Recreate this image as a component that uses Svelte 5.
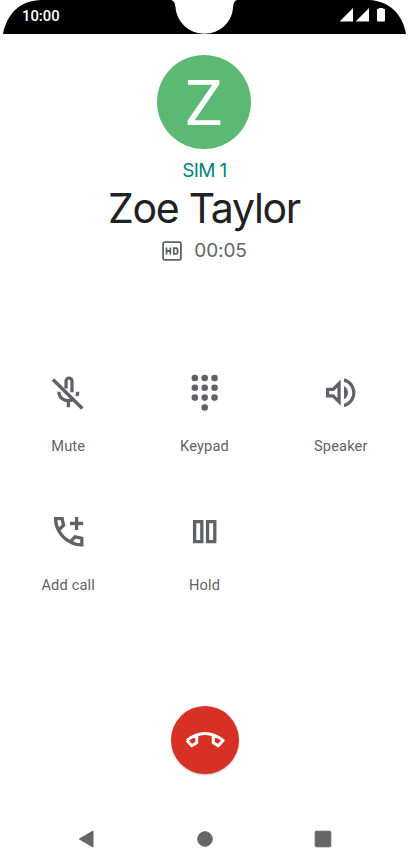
<script lang="ts">
	interface Props {
		name?: string;
		sim?: string;
		duration?: string;
	}

	let { name = 'Zoe Taylor', sim = 'SIM 1', duration = '00:05' }: Props = $props();

	const actions = [
		{ id: 'mute', label: 'Mute' },
		{ id: 'keypad', label: 'Keypad' },
		{ id: 'speaker', label: 'Speaker' },
		{ id: 'add', label: 'Add call' },
		{ id: 'hold', label: 'Hold' }
	];

	const dots = [
		[6, 3], [12, 3], [18, 3],
		[6, 9], [12, 9], [18, 9],
		[6, 15], [12, 15], [18, 15],
		[12, 21]
	];
</script>

<div class="screen">
	<header class="status">
		<svg class="status-shape" viewBox="0 0 409 34">
			<path d="M3 34C7 14 20 0 42 0H171Q175 1 175.5 7C176.5 22 189 33.7 204.5 33.7C220 33.7 232.5 22 233 7Q233.5 1 237 0H369C390 1 403 15 406 34Z" />
		</svg>
		<span class="time">10:00</span>
		<svg class="status-icons" viewBox="0 0 46 15">
			<path d="M0 13.5V13L13 0V13.5ZM16 13.5V13L29 0V13.5Z" />
			<path d="M37 1.5Q37 .8 37.8 .8H39V0H43V.8H44.2Q45 .8 45 1.5V12.5Q45 13.5 44 13.5H38Q37 13.5 37 12.5Z" />
		</svg>
	</header>

	<section class="caller">
		<div class="avatar">{name[0]}</div>
		<div class="sim">{sim}</div>
		<h1 class="name">{name}</h1>
		<div class="meta">
			<svg class="hd" viewBox="0 0 20 20">
				<rect x="1.1" y="1.1" width="17.8" height="17.8" rx="1.6" />
				<path d="M4.5 6.5V13.5M8.3 6.5V13.5M4.5 10H8.3M11.8 7.2H14.6L15.5 8.1V11.9L14.6 12.8H11.8Z" />
			</svg>
			<span>{duration}</span>
		</div>
	</section>

	<section class="actions">
		{#each actions as action (action.id)}
			<button class="action">
				<svg class="icon" viewBox="0 0 24 24">
					{#if action.id === 'mute'}
						<path class="line" d="M10.4 9.4V4.9A1.8 1.8 0 0 1 14 4.9V11.7M6 11.4C6 14.8 8.6 16.8 11.8 16.8Q13.6 16.8 15 16M17.5 11.4Q17.5 12.7 17 14M11.8 16.8V20.9" />
						<path class="line slash" d="M2.4 4L20.3 21.6" />
					{:else if action.id === 'keypad'}
						{#each dots as [x, y]}
							<circle cx={x} cy={y} r="2" />
						{/each}
					{:else if action.id === 'speaker'}
						<path d="M3 9v6h4l5 5V4L7 9H3zm7-.17v6.34L7.83 13H5v-2h2.83L10 8.83zM16.5 12c0-1.77-1.02-3.29-2.5-4.03v8.05c1.48-.73 2.5-2.25 2.5-4.02zM14 3.23v2.06c2.89.86 5 3.54 5 6.71s-2.11 5.85-5 6.71v2.06c4.01-.91 7-4.49 7-8.77 0-4.28-2.99-7.86-7-8.77z" />
					{:else if action.id === 'add'}
						<path class="line" d="M4 4H8L8.9 8.1L5.8 11.1Q4 8 4 4ZM5.8 11.1Q8.2 15.8 12.9 18.2L15.9 15.1L20 16V20Q16 20 12.9 18.2M16.8 3V11M12.8 7H20.8" />
					{:else}
						<path class="line" d="M5.85 5.9H10.25V18.1H5.85ZM13.75 5.9H18.15V18.1H13.75Z" />
					{/if}
				</svg>
				<span>{action.label}</span>
			</button>
		{/each}
	</section>

	<button class="end" aria-label="End call">
		<svg viewBox="0 0 40 18">
			<path d="M1.9 9.4Q20 -4.4 38.1 9.4L33.2 14.7L28.3 11.7V4.6M1.9 9.4L6.8 14.7L11.7 11.7V4.6" />
		</svg>
	</button>

	<nav class="nav">
		<svg viewBox="0 0 20 20"><path d="M2.3 10L16 2V18Z" /></svg>
		<svg viewBox="0 0 20 20"><circle cx="10" cy="10" r="7.3" /></svg>
		<svg viewBox="0 0 20 20"><rect x="2.2" y="2.2" width="15.6" height="15.6" rx="1" /></svg>
	</nav>
</div>

<style>
	:global(body) {
		background: #fff;
	}

	.screen {
		display: flex;
		flex-direction: column;
		align-items: center;
		width: 409px;
		height: 864px;
		overflow: hidden;
		background: #fff;
		font-family: Roboto, sans-serif;
		color: #5f6368;
	}

	.status {
		position: relative;
		display: flex;
		justify-content: space-between;
		box-sizing: border-box;
		width: 100%;
		height: 34px;
		padding: 8px 23.5px 0 22px;
	}

	.status-shape {
		position: absolute;
		inset: 0;
		width: 409px;
		height: 34px;
	}

	.time {
		position: relative;
		font-size: 14.8px;
		font-weight: 500;
		line-height: 16px;
		color: #fff;
	}

	.status-icons {
		position: relative;
		width: 46px;
		height: 15px;
		fill: #fff;
	}

	.caller {
		display: flex;
		flex-direction: column;
		align-items: center;
		height: 314px;
		padding-top: 21px;
		font-family: Inter, sans-serif;
	}

	.avatar {
		width: 94px;
		height: 94px;
		margin-right: 1px;
		border-radius: 50%;
		background: #5bb974;
		font-family: Roboto, sans-serif;
		font-size: 63px;
		line-height: 98px;
		text-align: center;
		color: #fff;
	}

	.sim {
		margin-top: 10px;
		font-size: 19px;
		line-height: 24px;
		letter-spacing: -0.6px;
		color: #00857a;
	}

	.name {
		margin: 0 0 0 -1px;
		font-size: 41px;
		font-weight: 400;
		line-height: 50px;
		letter-spacing: -1.3px;
		white-space: nowrap;
		color: #202124;
	}

	.meta {
		display: flex;
		align-items: center;
		gap: 12px;
		margin-top: 6px;
		font-size: 19px;
		line-height: 24px;
		letter-spacing: -0.1px;
	}

	.hd {
		width: 20px;
		height: 20px;
		fill: none;
		stroke: #5f6368;
		stroke-width: 1.8;
	}

	.actions {
		display: grid;
		grid-template-columns: repeat(3, 136.3px);
		grid-auto-rows: 139px;
		height: 278px;
	}

	.action {
		display: flex;
		flex-direction: column;
		align-items: center;
		gap: 25px;
		padding: 4px 0 0;
		border: none;
		background: none;
		font-family: Roboto, sans-serif;
		font-size: 14.6px;
		line-height: 18px;
		letter-spacing: 0.15px;
		color: #5f6368;
	}

	.icon {
		width: 39.4px;
		height: 39.4px;
		fill: #5f6368;
	}

	.line {
		fill: none;
		stroke: #5f6368;
		stroke-width: 2;
	}

	.slash {
		stroke-width: 2.1;
	}

	.end {
		display: flex;
		align-items: center;
		justify-content: center;
		width: 68px;
		height: 68px;
		margin-top: 59px;
		padding: 0;
		border: none;
		border-radius: 50%;
		background: #d93025;
		box-shadow: 0 1px 2px rgba(0, 0, 0, 0.25);
	}

	.end svg {
		width: 40px;
		height: 18px;
		fill: none;
		stroke: #fff;
		stroke-width: 3;
		stroke-linejoin: round;
	}

	.nav {
		display: flex;
		justify-content: space-between;
		width: 256px;
		margin-top: 54.5px;
	}

	.nav svg {
		width: 20px;
		height: 20px;
		fill: #666;
		stroke: #666;
		stroke-linejoin: round;
	}
</style>
